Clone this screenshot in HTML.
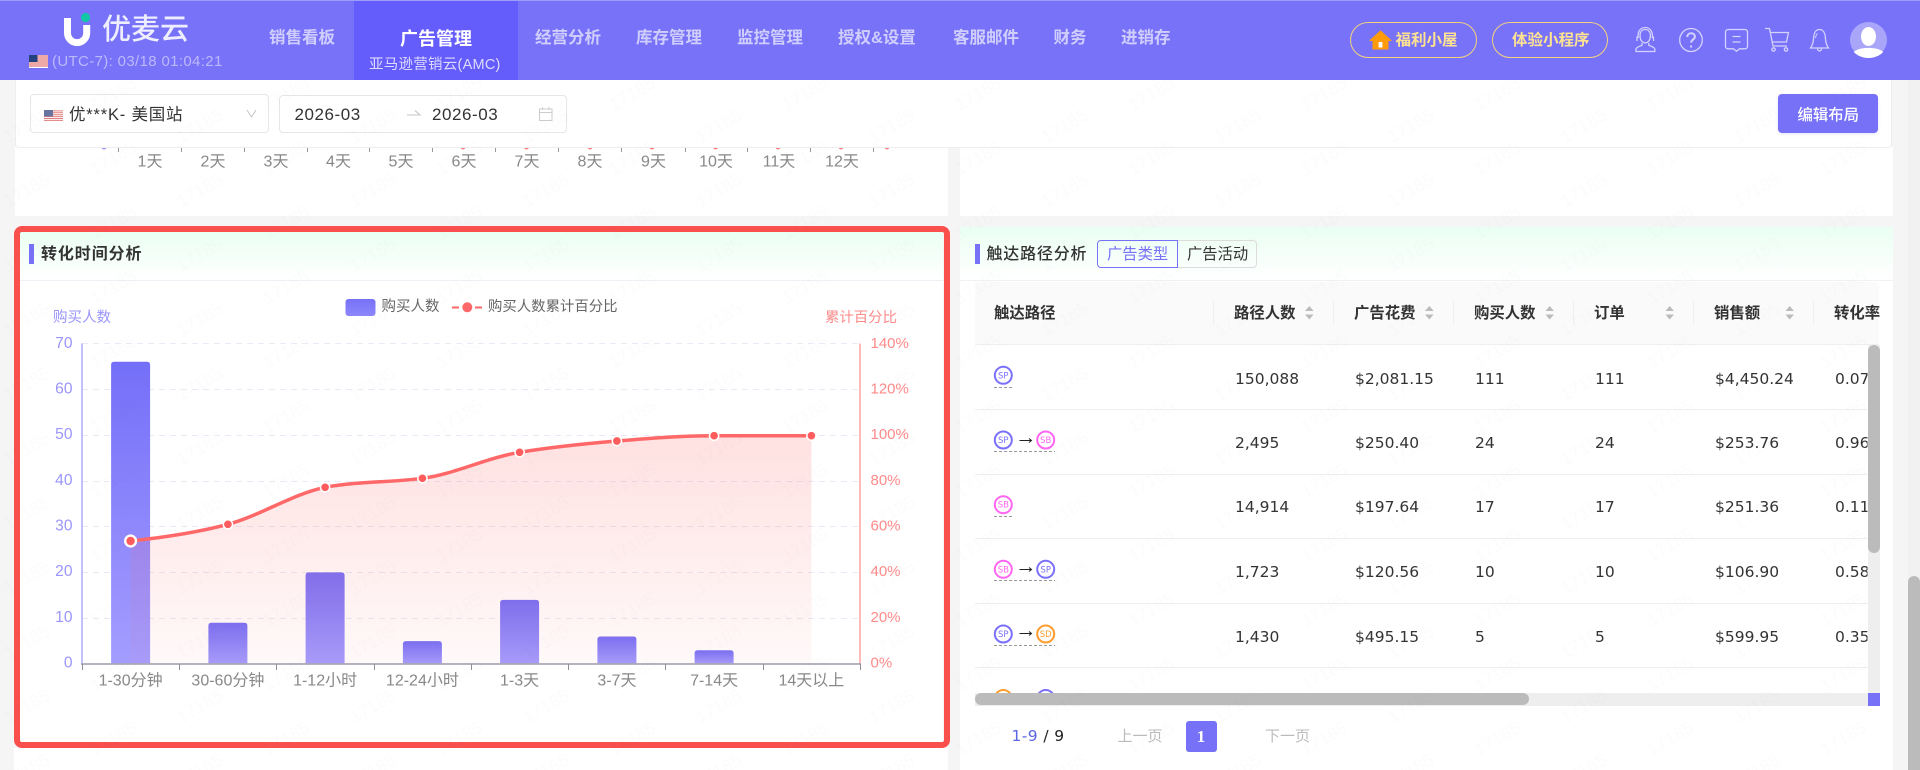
<!DOCTYPE html>
<html lang="zh-CN"><head><meta charset="utf-8"><title>转化时间分析</title>
<style>
*{box-sizing:border-box;margin:0;padding:0}
html,body{width:1920px;height:770px;overflow:hidden;background:#f5f5f5;font-family:"Liberation Sans","Noto Sans CJK SC",sans-serif;color:#333}
.a{position:absolute}
.t{position:absolute;white-space:nowrap;line-height:20px;height:20px}
.nav{font-size:16.5px;font-weight:700;color:#d0cefd;top:28px}
.th{font-size:15.4px;font-weight:700;color:#333;top:304px}
.td{font-family:"DejaVu Sans","Liberation Sans",sans-serif;font-size:15.5px;color:#333}
svg{position:absolute;overflow:visible}
svg text{font-family:"Liberation Sans","Noto Sans CJK SC",sans-serif}
</style></head><body>

<!-- page panels -->
<div class="a" style="left:1908px;top:0;width:12px;height:770px;background:#f1f1f1"></div>
<div class="a" style="left:1908px;top:576px;width:12px;height:194px;background:#bbb;border-radius:6px 6px 0 0"></div>
<div class="a" style="left:15px;top:147px;width:933px;height:69px;background:#fff"></div>
<div class="a" style="left:960px;top:147px;width:933px;height:69px;background:#fff"></div>
<div class="a" style="left:14px;top:748px;width:934px;height:22px;background:#fff"></div>

<!-- previous chart remains -->
<svg class="a" style="left:0;top:0" width="1920" height="770">
<g stroke="#999" stroke-width="1"><path d="M118.500 147v5M181.500 147v5M244.500 147v5M307.500 147v5M369.500 147v5M432.500 147v5M495.500 147v5M558.500 147v5M621.500 147v5M685.500 147v5M747.500 147v5M810.500 147v5M873.500 147v5"/></g>
<g fill="#ff7b7b"><circle cx="463" cy="147" r="2.500"/><circle cx="526.500" cy="147" r="2.500"/><circle cx="590" cy="147" r="2.500"/><circle cx="652" cy="147" r="2.500"/><circle cx="715.500" cy="147" r="2.500"/><circle cx="778" cy="147" r="2.500"/><circle cx="841" cy="147" r="2.500"/><circle cx="887" cy="147" r="2.500"/></g>
<circle cx="104" cy="147" r="2.500" fill="#9a95fb"/>
<g font-size="16" fill="#888" text-anchor="middle" dominant-baseline="central">
<text x="150" y="162">1天</text><text x="213" y="162">2天</text><text x="276" y="162">3天</text><text x="338.500" y="162">4天</text><text x="401" y="162">5天</text><text x="464" y="162">6天</text><text x="527" y="162">7天</text><text x="590" y="162">8天</text><text x="653.500" y="162">9天</text><text x="716" y="162">10天</text><text x="779" y="162">11天</text><text x="842" y="162">12天</text>
</g>
</svg>

<!-- filter bar -->
<div class="a" style="left:15px;top:80px;width:1877px;height:68px;background:#fff;border:1px solid #eee;border-top:0;border-radius:0 0 4px 4px"></div>
<div class="a" style="left:30px;top:94px;width:239px;height:39px;border:1px solid #e6e6e6;border-radius:4px"></div>
<div class="a" style="left:279px;top:95px;width:288px;height:38px;border:1px solid #e6e6e6;border-radius:4px"></div>
<svg style="left:44px;top:110px;opacity:.75" width="19" height="12" viewBox="0 0 19 12"><rect width="19" height="12" fill="#fff"/><path d="M0 .9h19M0 2.800h19M0 4.700h19M0 6.600h19M0 8.500h19M0 10.400h19" stroke="#d9534f" stroke-width="1"/><rect width="9" height="6.500" fill="#34467f"/></svg>
<div class="t" style="left:69px;top:105px;font-size:16.500px;letter-spacing:.8px;color:#333">优***K- 美国站</div>
<svg style="left:246px;top:109px" width="11" height="9"><path d="M1 1l4.500 7L10 1" fill="none" stroke="#c4c4c4" stroke-width="1"/></svg>
<div class="t" style="left:294.500px;top:105px;font-size:17px;letter-spacing:.55px;color:#333">2026-03</div>
<svg style="left:407px;top:109px" width="14" height="8"><path d="M0 6h13L8 1.500" fill="none" stroke="#c4c4c4" stroke-width="1.100"/></svg>
<div class="t" style="left:432px;top:105px;font-size:17px;letter-spacing:.55px;color:#333">2026-03</div>
<svg style="left:539px;top:107px" width="14" height="14"><rect x=".5" y="2" width="12.500" height="11.500" fill="none" stroke="#ccc"/><path d="M.5 5.500h12.500M3.500 0v3M10 0v3" stroke="#ccc" fill="none"/></svg>
<div class="a" style="left:1778px;top:94px;width:100px;height:39px;background:#7771f8;border-radius:4px;box-shadow:0 1px 3px rgba(119,113,248,.2)"></div>
<div class="t" style="left:1797.500px;top:105.500px;font-size:15.400px;color:#fff;font-weight:500">编辑布局</div>

<!-- header -->
<div class="a" style="left:0;top:0;width:1920px;height:79.500px;background:#7772f8"></div>
<div class="a" style="left:0;top:0;width:1920px;height:1px;background:#a09cfa"></div>
<div class="a" style="left:354px;top:1px;width:164px;height:78.500px;background:#655cfc"></div>
<svg style="left:60px;top:12px" width="34" height="36" viewBox="0 0 34 36"><path d="M7.500 6V21a9.600 9.600 0 0 0 19.200 0V13" fill="none" stroke="#fff" stroke-width="7" stroke-linecap="butt"/><circle cx="25.500" cy="5.500" r="4.600" fill="#12c7a8"/></svg>
<div class="t" style="left:102px;top:15px;font-size:29px;line-height:30px;height:30px;color:#eeeefe;font-weight:500">优麦云</div>
<svg style="left:29px;top:55px" width="19" height="13" viewBox="0 0 19 13"><rect width="19" height="13" fill="#fff"/><path d="M0 1h19M0 3h19M0 5h19M0 7h19M0 9h19M0 11h19" stroke="#d9534f" stroke-width="1"/><rect width="8.500" height="7" fill="#24427f"/></svg>
<div class="t" style="left:52px;top:52px;font-size:15px;letter-spacing:.35px;color:#bcb9fb">(UTC-7): 03/18 01:04:21</div>

<div class="t nav" style="left:269px">销售看板</div>
<div class="t" style="left:400px;top:29px;font-size:18px;font-weight:700;color:#fff">广告管理</div>
<div class="t" style="left:369px;top:55px;font-size:14.500px;letter-spacing:.25px;color:#dddcfe">亚马逊营销云(AMC)</div>
<div class="t nav" style="left:535px">经营分析</div>
<div class="t nav" style="left:636px">库存管理</div>
<div class="t nav" style="left:737px">监控管理</div>
<div class="t nav" style="left:838px">授权&amp;设置</div>
<div class="t nav" style="left:953px">客服邮件</div>
<div class="t nav" style="left:1053.500px">财务</div>
<div class="t nav" style="left:1121px">进销存</div>

<div class="a" style="left:1350px;top:22px;width:127px;height:36px;border:1px solid #f3d27f;border-radius:18px"></div>
<div class="a" style="left:1492px;top:22px;width:116px;height:36px;border:1px solid #f3d27f;border-radius:18px"></div>
<svg style="left:1369px;top:30px" width="23" height="20" viewBox="0 0 23 20"><path d="M11.500 1L1 10.500h3V19h15v-8.500h3z" fill="#ff9a0b" stroke="#ff9a0b" stroke-linejoin="round"/><rect x="9.600" y="12" width="3.800" height="5.500" fill="#fff"/></svg>
<div class="t" style="left:1395.500px;top:31px;font-size:15.500px;font-weight:700;color:#ffe391">福利小屋</div>
<div class="t" style="left:1512px;top:31px;font-size:15.500px;font-weight:700;color:#ffe391">体验小程序</div>

<svg style="left:0;top:0" width="1920" height="80" fill="none" stroke="#d5d3fd" stroke-width="1.300">
<!-- headset -->
<path d="M1638.200 38c-1-6 2-10.500 7-10.500s8 4.500 7 10.500"/>
<path d="M1640 36c0-4.500 2.400-6.500 5.200-6.500s5.200 2 5.200 6.500c0 3.500-2 6.800-5.200 6.800s-5.200-3.300-5.200-6.800z"/>
<path d="M1637 36.500v4.500M1653.500 36.500v4.500M1642 43v2.300c-2 1-5.500 1.500-6 3.700v2.500h18.800V49c-.5-2.200-4-2.700-6-3.700V43"/>
<!-- help -->
<ellipse cx="1691" cy="40" rx="11.300" ry="11.500"/>
<path d="M1687.300 37c0-2.300 1.600-3.700 3.800-3.700s3.800 1.400 3.800 3.300c0 2.900-3.800 3-3.800 6" stroke-width="2"/><path d="M1691.100 45.500v2" stroke-width="2"/>
<!-- message -->
<path d="M1728 29.500h17c1.300 0 2.500 1.100 2.500 2.500v14.500c0 1.300-1.200 2.300-2.500 2.300h-5.500l-3 2.500-3-2.500H1728c-1.300 0-2.500-1-2.500-2.300V32c0-1.400 1.200-2.500 2.500-2.500z"/>
<path d="M1732.500 36.500h8M1732.500 42h8"/>
<!-- cart -->
<path d="M1765 28.500h4.500l3.500 17.500h14"/><path d="M1770 32.500h18.500l-2 9.500h-14.500"/><circle cx="1773.500" cy="49.500" r="1.700"/><circle cx="1786" cy="49.500" r="1.700"/>
<!-- bell -->
<path d="M1819.500 29.500c3.800 0 5.500 3.700 5.800 7.500.4 4.300.7 7.500 3.200 11h-18c2.500-3.500 2.800-6.700 3.200-11 .3-3.800 1.900-7.500 5.800-7.500z"/><path d="M1817.500 48.300c0 3.500 4 3.500 4 0"/><path d="M1815.500 38c.2-2 .8-3.500 2-4.500" stroke-width="1"/>
</svg>
<svg style="left:1850px;top:22px" width="37" height="36" viewBox="0 0 37 36"><ellipse cx="18.500" cy="18" rx="18.500" ry="18" fill="#a9a6fa"/><ellipse cx="18.500" cy="14.500" rx="7.500" ry="9.500" fill="#fff"/><path d="M3.800 30c5-5.500 24.400-5.500 29.400 0-3.500 3.800-9 6-14.700 6S7.300 33.800 3.800 30z" fill="#fff"/></svg>

<!-- LEFT highlighted panel -->
<div class="a" style="left:20px;top:232px;width:923px;height:510px;background:#fff"></div>
<div class="a" style="left:20px;top:232px;width:923px;height:48px;background:linear-gradient(#eafff3,#fff)"></div>
<div class="a" style="left:20px;top:280px;width:923px;height:1px;background:#eef0f5"></div>
<div class="a" style="left:29px;top:244px;width:5px;height:20px;background:#7771f8"></div>
<div class="t" style="left:41px;top:245px;font-size:16px;letter-spacing:.9px;font-weight:700;color:#333">转化时间分析</div>

<svg style="left:0;top:0" width="1920" height="770">
<defs>
<linearGradient id="bar" x1="0" y1="0" x2="0" y2="1"><stop offset="0" stop-color="#746ff8"/><stop offset="1" stop-color="#a49dff"/></linearGradient>
<linearGradient id="leg" x1="0" y1="0" x2="0" y2="1"><stop offset="0" stop-color="#7771f8"/><stop offset="1" stop-color="#8c87fb"/></linearGradient>
<linearGradient id="area" gradientUnits="userSpaceOnUse" x1="0" y1="435" x2="0" y2="664"><stop offset="0" stop-color="#ff6868" stop-opacity=".2"/><stop offset="1" stop-color="#ff6868" stop-opacity=".04"/></linearGradient>
</defs>
<g stroke="#e8eaf8" stroke-width="1" stroke-dasharray="6 5">
<path d="M82 343.500H860M82 389.500H860M82 435.500H860M82 481.500H860M82 526.500H860M82 572.500H860M82 618.500H860"/>
</g>
<g fill="url(#bar)">
<path d="M111.100 664V364.700Q111.100 361.700 114.100 361.700H147.100Q150.100 361.700 150.100 364.700V664Z"/>
<path d="M208.400 664V625.800Q208.400 622.800 211.400 622.800H244.400Q247.400 622.800 247.400 625.800V664Z"/>
<path d="M305.600 664V575.400Q305.600 572.400 308.600 572.400H341.600Q344.600 572.400 344.600 575.400V664Z"/>
<path d="M402.900 664V644.100Q402.900 641.100 405.900 641.100H438.900Q441.900 641.100 441.900 644.100V664Z"/>
<path d="M500.100 664V602.900Q500.100 599.900 503.100 599.900H536.100Q539.100 599.900 539.100 602.900V664Z"/>
<path d="M597.400 664V639.500Q597.400 636.500 600.400 636.500H633.400Q636.400 636.500 636.400 639.500V664Z"/>
<path d="M694.600 664V653.300Q694.600 650.300 697.600 650.300H730.600Q733.600 650.300 733.600 653.300V664Z"/>
</g>
<path fill="url(#area)" d="M130.600 541C163 537.500 195.500 533 227.900 524.300S292.700 494 325.100 487.300C357.500 481.300 390 482.600 422.400 478.300C454.800 474 487.200 457.600 519.600 452.300C552 447 584.500 443.700 616.900 441C649.300 438.300 681.700 435.700 714.100 435.700H811.400V664H130.600Z"/>
<path fill="none" stroke="#ff6868" stroke-width="3.500" d="M130.600 541C163 537.500 195.500 533 227.900 524.300S292.700 494 325.100 487.300C357.500 481.300 390 482.600 422.400 478.300C454.800 474 487.200 457.600 519.600 452.300C552 447 584.500 443.700 616.900 441C649.300 438.300 681.700 435.700 714.100 435.700H811.400"/>
<g fill="#ff5d5d" stroke="#fff" stroke-width="1.500">
<circle cx="227.900" cy="524.300" r="4.600"/><circle cx="325.100" cy="487.300" r="4.600"/><circle cx="422.400" cy="478.300" r="4.600"/><circle cx="519.600" cy="452.300" r="4.600"/><circle cx="616.900" cy="441" r="4.600"/><circle cx="714.100" cy="435.700" r="4.600"/><circle cx="811.400" cy="435.700" r="4.600"/>
</g>
<circle cx="130.600" cy="541" r="5.400" fill="#ff5d5d" stroke="#fff" stroke-width="2.400"/>
<!-- axes -->
<path d="M82 343.500V664" stroke="#aeaafc" stroke-width="1.500" fill="none"/>
<path d="M860 343.500V664" stroke="#ffa3a3" stroke-width="1.500" fill="none"/>
<path d="M81 664H861" stroke="#a9a8b4" stroke-width="1.800" fill="none"/>
<path d="M82.500 664v6M179.500 664v6M276.500 664v6M374.500 664v6M471.500 664v6M568.500 664v6M665.500 664v6M763.500 664v6M860.500 664v6" stroke="#8f8f95" stroke-width="1" fill="none"/>
<g font-size="15.600" fill="#9a95fb" text-anchor="end" dominant-baseline="central">
<text x="72.500" y="343.500">70</text><text x="72.500" y="389">60</text><text x="72.500" y="434.500">50</text><text x="72.500" y="480.500">40</text><text x="72.500" y="526">30</text><text x="72.500" y="571.500">20</text><text x="72.500" y="617.500">10</text><text x="72.500" y="663">0</text>
</g>
<g font-size="15" fill="#ff8a8a" dominant-baseline="central">
<text x="870.500" y="343.500">140%</text><text x="870.500" y="389">120%</text><text x="870.500" y="434.500">100%</text><text x="870.500" y="480.500">80%</text><text x="870.500" y="526">60%</text><text x="870.500" y="571.500">40%</text><text x="870.500" y="617.500">20%</text><text x="870.500" y="663">0%</text>
</g>
<g font-size="16" fill="#888" text-anchor="middle" dominant-baseline="central">
<text x="130.600" y="681">1-30分钟</text><text x="227.900" y="681">30-60分钟</text><text x="325.100" y="681">1-12小时</text><text x="422.400" y="681">12-24小时</text><text x="519.600" y="681">1-3天</text><text x="616.900" y="681">3-7天</text><text x="714.100" y="681">7-14天</text><text x="811.400" y="681">14天以上</text>
</g>
<text x="53" y="318" font-size="14.500" fill="#9a95fb" dominant-baseline="central">购买人数</text>
<text x="825" y="318" font-size="14.400" fill="#ff8a8a" dominant-baseline="central">累计百分比</text>
<rect x="345.500" y="299" width="30" height="17" rx="3" fill="url(#leg)"/>
<text x="381.500" y="307" font-size="14.500" fill="#666" dominant-baseline="central">购买人数</text>
<path d="M452 307.500h7M475 307.500h7" stroke="#ff6868" stroke-width="2" fill="none"/>
<circle cx="467.300" cy="307.300" r="5" fill="#ff6868"/>
<text x="488" y="307" font-size="14.400" fill="#666" dominant-baseline="central">购买人数累计百分比</text>
</svg>

<div class="a" style="left:13.500px;top:226px;width:936px;height:522px;border:6px solid #f9504e;border-radius:8px"></div>

<!-- RIGHT panel -->
<div class="a" style="left:960px;top:227px;width:933px;height:543px;background:#fff"></div>
<div class="a" style="left:960px;top:227px;width:933px;height:53px;background:linear-gradient(#eafff3,#fff)"></div>
<div class="a" style="left:960px;top:280px;width:933px;height:1px;background:#f0f1f4"></div>
<div class="a" style="left:974.500px;top:244px;width:5px;height:20px;background:#7771f8"></div>
<div class="t" style="left:986.500px;top:245px;font-size:16px;letter-spacing:.8px;font-weight:500;color:#333">触达路径分析</div>
<div class="a" style="left:1177px;top:240px;width:80px;height:28px;border:1px solid #dcdcdc;border-left:0;border-radius:0 4px 4px 0"></div>
<div class="a" style="left:1097px;top:240px;width:81px;height:28px;border:1px solid #7771f8;border-radius:4px 0 0 4px"></div>
<div class="t" style="left:1107px;top:245px;font-size:15.300px;color:#7771f8">广告类型</div>
<div class="t" style="left:1187px;top:245px;font-size:15.300px;color:#333">广告活动</div>

<!-- table header -->
<div class="a" style="left:975px;top:282px;width:904px;height:63px;background:#fafafa;border-bottom:1px solid #efefef;border-radius:4px 4px 0 0"></div>
<svg style="left:0;top:0" width="1920" height="350">
<path d="M1213.500 300v25M1333.500 300v25M1453.500 300v25M1573.500 300v25M1693.500 300v25M1813.500 300v25" stroke="#f0f0f0" fill="none"/>
<g fill="#bcbcbc">
<path d="M1305 311l4.300-5 4.300 5zM1305 314.500h8.600l-4.300 5z"/>
<path d="M1425 311l4.300-5 4.300 5zM1425 314.500h8.600l-4.300 5z"/>
<path d="M1545.400 311l4.300-5 4.300 5zM1545.400 314.500h8.600l-4.300 5z"/>
<path d="M1665.400 311l4.300-5 4.300 5zM1665.400 314.500h8.600l-4.300 5z"/>
<path d="M1785.400 311l4.300-5 4.300 5zM1785.400 314.500h8.600l-4.300 5z"/>
</g></svg>
<div class="t th" style="left:994px">触达路径</div>
<div class="t th" style="left:1234px">路径人数</div>
<div class="t th" style="left:1354px">广告花费</div>
<div class="t th" style="left:1474px">购买人数</div>
<div class="t th" style="left:1594px">订单</div>
<div class="t th" style="left:1714px">销售额</div>
<div class="t th" style="left:1834px">转化率</div>

<!-- table body (clipped) -->
<div class="a" style="left:0;top:0;width:1920px;height:770px;clip-path:inset(345px 52.500px 77px 975px)">
<svg style="left:0;top:0" width="1920" height="770">
<defs>
<g id="sp"><circle r="8.500" fill="#fff" stroke="#7b70fb" stroke-width="2"/><text text-anchor="middle" y="3" font-size="8.500" fill="#7b70fb" style="font-family:'DejaVu Sans',sans-serif">SP</text></g>
<g id="sb"><circle r="8.500" fill="#fff" stroke="#ff66f2" stroke-width="2"/><text text-anchor="middle" y="3" font-size="8.500" fill="#ff66f2" style="font-family:'DejaVu Sans',sans-serif">SB</text></g>
<g id="sd"><circle r="8.500" fill="#fff" stroke="#ff9d2e" stroke-width="2"/><text text-anchor="middle" y="3" font-size="8.500" fill="#ff9d2e" style="font-family:'DejaVu Sans',sans-serif">SD</text></g>
</defs>
<path d="M975 409.500H1868M975 474.500H1868M975 538.500H1868M975 603.500H1868M975 667.500H1868" stroke="#efefef" fill="none"/>
<g stroke="#999" stroke-width="1" stroke-dasharray="3 2" fill="none">
<path d="M994 387.500h19M994 451.500h61M994 516.500h19M994 580.500h61M994 645.500h61"/>
</g>
<use href="#sp" x="1003.300" y="375.300"/>
<use href="#sp" x="1003.300" y="440"/><use href="#sb" x="1045.700" y="440"/>
<use href="#sb" x="1003.300" y="504.700"/>
<use href="#sb" x="1003.300" y="569.300"/><use href="#sp" x="1045.700" y="569.300"/>
<use href="#sp" x="1003.300" y="634"/><use href="#sd" x="1045.700" y="634"/>
<use href="#sd" x="1003.300" y="698.500"/><use href="#sp" x="1045.700" y="698.500"/>
<g stroke="#222" stroke-width="1" fill="none">
<path d="M1019.500 440.500h12M1029 438.500l2.500 2-2.500 2"/>
<path d="M1019.500 569.500h12M1029 567.500l2.500 2-2.500 2"/>
<path d="M1019.500 633.500h12M1029 631.500l2.500 2-2.500 2"/>
<path d="M1019.500 698.500h12M1029 696.500l2.500 2-2.500 2"/>
</g>
</svg>
<div class="t td" style="left:1235px;top:369px">150,088</div><div class="t td" style="left:1355px;top:369px">$2,081.15</div><div class="t td" style="left:1475px;top:369px">111</div><div class="t td" style="left:1595px;top:369px">111</div><div class="t td" style="left:1715px;top:369px">$4,450.24</div><div class="t td" style="left:1835px;top:369px">0.07%</div>
<div class="t td" style="left:1235px;top:433px">2,495</div><div class="t td" style="left:1355px;top:433px">$250.40</div><div class="t td" style="left:1475px;top:433px">24</div><div class="t td" style="left:1595px;top:433px">24</div><div class="t td" style="left:1715px;top:433px">$253.76</div><div class="t td" style="left:1835px;top:433px">0.96%</div>
<div class="t td" style="left:1235px;top:497px">14,914</div><div class="t td" style="left:1355px;top:497px">$197.64</div><div class="t td" style="left:1475px;top:497px">17</div><div class="t td" style="left:1595px;top:497px">17</div><div class="t td" style="left:1715px;top:497px">$251.36</div><div class="t td" style="left:1835px;top:497px">0.11%</div>
<div class="t td" style="left:1235px;top:562px">1,723</div><div class="t td" style="left:1355px;top:562px">$120.56</div><div class="t td" style="left:1475px;top:562px">10</div><div class="t td" style="left:1595px;top:562px">10</div><div class="t td" style="left:1715px;top:562px">$106.90</div><div class="t td" style="left:1835px;top:562px">0.58%</div>
<div class="t td" style="left:1235px;top:627px">1,430</div><div class="t td" style="left:1355px;top:627px">$495.15</div><div class="t td" style="left:1475px;top:627px">5</div><div class="t td" style="left:1595px;top:627px">5</div><div class="t td" style="left:1715px;top:627px">$599.95</div><div class="t td" style="left:1835px;top:627px">0.35%</div>
</div>

<!-- table scrollbars -->
<div class="a" style="left:1868px;top:345px;width:11.500px;height:348px;background:#eee"></div>
<div class="a" style="left:1868px;top:345px;width:11.500px;height:208px;background:#bbb;border-radius:6px"></div>
<div class="a" style="left:975px;top:693px;width:893px;height:13px;background:#eee"></div>
<div class="a" style="left:975px;top:693px;width:553.500px;height:12px;background:#bbb;border-radius:6px"></div>
<div class="a" style="left:1868px;top:693px;width:11.500px;height:12.500px;background:#7771f8"></div>

<!-- pagination -->
<div class="t" style="left:1011.500px;top:726px;font-family:'DejaVu Sans',sans-serif;font-size:15.500px;letter-spacing:.4px;color:#222"><span style="color:#5a67e0">1-9</span> / 9</div>
<div class="t" style="left:1117.500px;top:727px;font-size:15px;color:#bbb">上一页</div>
<div class="a" style="left:1185.500px;top:721px;width:31px;height:31px;background:#7771f8;border-radius:3px"></div>
<div class="t" style="left:1185.500px;top:727px;width:31px;text-align:center;font-family:'Liberation Serif',serif;font-weight:700;font-size:17px;color:#fff">1</div>
<div class="t" style="left:1265px;top:727px;font-size:15px;color:#bbb">下一页</div>

<!-- faint watermark -->
<svg style="left:0;top:80px" width="1920" height="690">
<defs><pattern id="wm" patternUnits="userSpaceOnUse" width="173" height="64.500" patternTransform="translate(29.700 -78)">
<g font-size="18" fill="#000" fill-opacity=".011" text-anchor="middle">
<text transform="translate(0 0) rotate(-30)">17185</text><text transform="translate(173 0) rotate(-30)">17185</text>
<text transform="translate(0 64.500) rotate(-30)">17185</text><text transform="translate(173 64.500) rotate(-30)">17185</text>
<text transform="translate(86.500 32.250) rotate(-30)">17185</text>
</g></pattern></defs>
<rect width="1908" height="690" fill="url(#wm)"/>
</svg>
</body></html>
